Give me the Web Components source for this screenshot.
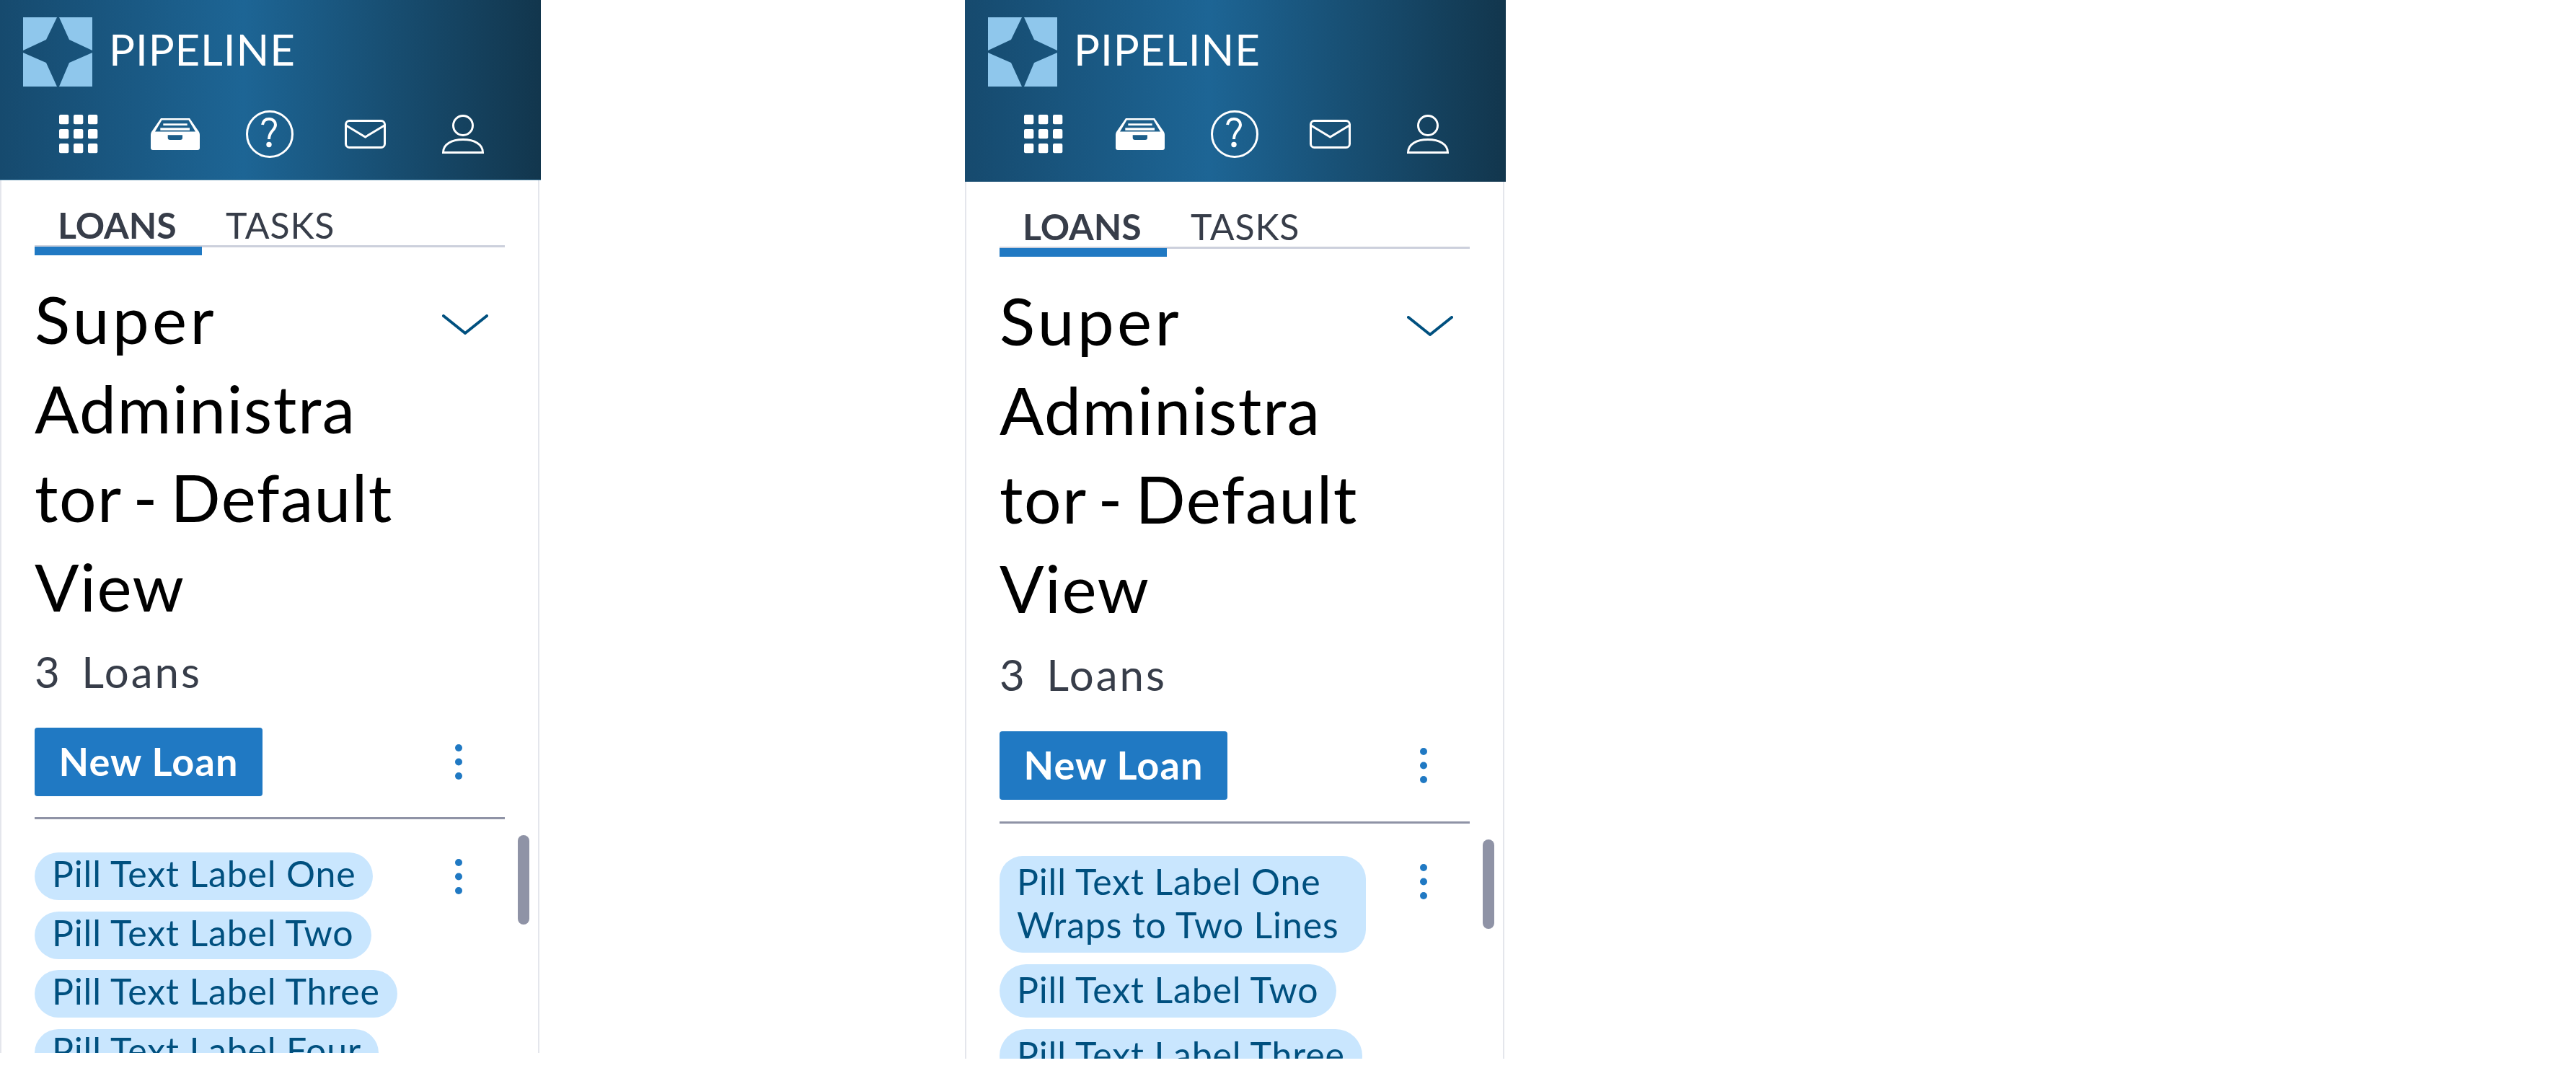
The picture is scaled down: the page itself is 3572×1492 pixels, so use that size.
<!DOCTYPE html>
<html>
<head>
<meta charset="utf-8">
<title>Pipeline</title>
<style>
    html, body{ margin: 0; background: #fff; }
    body{ width: 3572px; height: 1492px; overflow: hidden; font-family: Lato, "Liberation Sans", sans-serif; }
    .row{ display: flex; align-items: flex-start; gap: 588px; }
</style>
</head>
<body>
<div class="row">
    <pipeline-panel>
        <loan-pill>Pill Text Label One</loan-pill>
        <loan-pill>Pill Text Label Two</loan-pill>
        <loan-pill>Pill Text Label Three</loan-pill>
        <loan-pill>Pill Text Label Four</loan-pill>
    </pipeline-panel>
    <pipeline-panel roomy>
        <loan-pill style="width: 508px; border-radius: 32px">Pill Text Label One Wraps to Two Lines</loan-pill>
        <loan-pill>Pill Text Label Two</loan-pill>
        <loan-pill>Pill Text Label Three</loan-pill>
    </pipeline-panel>
</div>
<script>
const headTemplate = document.createElement('template')
headTemplate.innerHTML = `
    <style>
        :host{
            display: block;
            flex: none;
            height: var(--head-height);
            box-sizing: border-box;
            padding: 24px 32px 0;
            background: linear-gradient(90deg, #164a6e 0%, #1d6595 45%, #12364d 100%);
            border-bottom: var(--head-line);
        }
        .brand{ display: flex; align-items: center; height: 96px; gap: 23px; }
        .brand svg{ width: 96px; height: 96px; flex: none; }
        .brand span{
            color: #fff;
            font: 400 60px/96px Lato, sans-serif;
            letter-spacing: 0.900px;
            position: relative;
            top: -4px;
        }
        nav{ display: flex; margin: 18px 0 0 50px; height: 96px; align-items: center; }
        nav svg{ display: block; flex: none; }
    </style>
    <div class="brand">
        <svg viewBox="0 0 96 96"><path fill="#8fc7ec" d="M0 0H47L32 31 0 46ZM50 0H96V46L64 31ZM0 49 32 63 47 96H0ZM96 49V96H50L64 63Z"/></svg>
        <span>PIPELINE</span>
    </div>
    <nav>
        <svg width="54" height="54" viewBox="0 0 54 54" fill="#fff">
            <rect x="0" y="0" width="13.300" height="13.300" rx="2"/><rect x="20" y="0" width="13.300" height="13.300" rx="2"/><rect x="40" y="0" width="13.300" height="13.300" rx="2"/>
            <rect x="0" y="20" width="13.300" height="13.300" rx="2"/><rect x="20" y="20" width="13.300" height="13.300" rx="2"/><rect x="40" y="20" width="13.300" height="13.300" rx="2"/>
            <rect x="0" y="40" width="13.300" height="13.300" rx="2"/><rect x="20" y="40" width="13.300" height="13.300" rx="2"/><rect x="40" y="40" width="13.300" height="13.300" rx="2"/>
        </svg>
        <svg style="margin-left:73px" width="68" height="44" viewBox="0 0 68 44" fill="#fff">
            <path fill-rule="evenodd" d="M14 0H54L67 19Q68 21 68 23V41Q68 44 65 44H3Q0 44 0 41V23Q0 21 1 19ZM15.500 2.500 6 18.500H62L52.500 2.500ZM23.700 23.300V27Q23.700 30 26.700 30H41Q44 30 44 27V23.300Z"/>
            <rect x="17.300" y="7.300" width="33.400" height="2.700"/><rect x="13.300" y="13.300" width="40.700" height="3.400"/>
        </svg>
        <svg style="margin-left:64px" width="66" height="66" viewBox="0 0 66 66">
            <circle cx="33" cy="33" r="31.500" fill="none" stroke="#fff" stroke-width="3"/>
            <path d="M23 20C24 14 28 12 32 12 38 12 41 16 41 20 41 28 32 28 32 40" fill="none" stroke="#fff" stroke-width="4"/>
            <circle cx="32" cy="47.500" r="3.700" fill="#fff"/>
        </svg>
        <svg style="margin-left:71px" width="57" height="40" viewBox="0 0 57 40" fill="none" stroke="#fff" stroke-width="3">
            <rect x="1.500" y="1.500" width="54" height="37" rx="5"/>
            <path d="M2 8 28.500 24 55 8"/>
        </svg>
        <svg style="margin-left:78px" width="58" height="54" viewBox="0 0 58 54" fill="none" stroke="#fff" stroke-width="3">
            <circle cx="29" cy="15" r="13.500"/>
            <path d="M1.500 52.500H56.500C56.500 41 45 34.500 29 34.500S1.500 41 1.500 52.500Z"/>
        </svg>
    </nav>
`
class PipelineHead extends HTMLElement{
    constructor(){
        super()
        this.attachShadow({mode: "open"})
        this.shadowRoot.appendChild(headTemplate.content.cloneNode(true))
    }
}
customElements.define('pipeline-head', PipelineHead)

const tabsTemplate = document.createElement('template')
tabsTemplate.innerHTML = `
    <style>
        :host{
            display: flex;
            height: 93px;
            box-sizing: border-box;
            margin: 0 46px;
            border-bottom: 3px solid #ccd0dc;
            align-items: flex-end;
            color: #373d49;
            font-size: 50px;
            line-height: 64px;
        }
        div{ position: relative; height: 60px; box-sizing: border-box; }
        .on{ font-weight: 700; width: 232px; padding-left: 32px; }
        .on::after{
            content: "";
            position: absolute;
            left: 0; right: 0; bottom: -14px;
            height: 12px;
            background: #2079c3;
        }
        .off{ padding-left: 33px; letter-spacing: 0.8px; }
    </style>
    <div class="on">LOANS</div>
    <div class="off">TASKS</div>
`
class PipelineTabs extends HTMLElement{
    constructor(){
        super()
        this.attachShadow({mode: "open"})
        this.shadowRoot.appendChild(tabsTemplate.content.cloneNode(true))
    }
}
customElements.define('pipeline-tabs', PipelineTabs)

const pillTemplate = document.createElement('template')
pillTemplate.innerHTML = `
    <style>
        :host{
            display: block;
            width: fit-content;
            box-sizing: border-box;
            padding: var(--pill-pad) 24px var(--pill-pad-end);
            margin-bottom: var(--pill-gap);
            border-radius: 37px;
            background: #c9e6fe;
            color: #00507f;
            font-size: 50px;
            line-height: var(--pill-line);
            letter-spacing: 0.85px;
        }
    </style>
    <slot></slot>
`
class LoanPill extends HTMLElement{
    constructor(){
        super()
        this.attachShadow({mode: "open"})
        this.shadowRoot.appendChild(pillTemplate.content.cloneNode(true))
    }
}
customElements.define('loan-pill', LoanPill)

const dotsTemplate = document.createElement('template')
dotsTemplate.innerHTML = `
    <style>
        :host{ display: block; width: 10px; flex: none; }
        svg{ display: block; }
    </style>
    <svg width="10" height="49" viewBox="0 0 10 49" fill="#2079c3">
        <circle cx="5" cy="5" r="5"/><circle cx="5" cy="24.500" r="5"/><circle cx="5" cy="44" r="5"/>
    </svg>
`
class KebabDots extends HTMLElement{
    constructor(){
        super()
        this.attachShadow({mode: "open"})
        this.shadowRoot.appendChild(dotsTemplate.content.cloneNode(true))
    }
}
customElements.define('kebab-dots', KebabDots)

const panelTemplate = document.createElement('template')
panelTemplate.innerHTML = `
    <style>
        :host{
            --head-height: 250px;
            --head-line: 1px solid #4d86a8;
            --count-gap: 20px;
            --button-gap: 41px;
            --rule-gap: 29px;
            --list-pad: 46px;
            --more-top: 9px;
            --pill-pad: 0px;
            --pill-pad-end: 7px;
            --pill-line: 59px;
            --pill-gap: 15.500px;
            display: flex;
            flex-direction: column;
            flex: none;
            width: 750px;
            height: 1460px;
            overflow: hidden;
            background: #fff;
            font-family: Lato, "Liberation Sans", sans-serif;
        }
        :host([roomy]){
            --head-height: 252px;
            --head-line: 0;
            --count-gap: 22px;
            --button-gap: 42px;
            --rule-gap: 30px;
            --list-pad: 44.500px;
            --more-top: 11px;
            --pill-pad: 5px;
            --pill-pad-end: 9px;
            --pill-line: 60px;
            --pill-gap: 16px;
            height: 1468px;
        }
        .body{
            flex: 1;
            min-height: 0;
            width: 748px;
            box-sizing: border-box;
            border-left: 2px solid #e4e6ec;
            border-right: 2px solid #e4e6ec;
        }
        .title-row{ display: flex; margin: 0 46px; padding-top: 37px; }
        h1{
            flex: 1;
            margin: 0;
            font-size: 91px;
            line-height: 123.500px;
            font-weight: 400;
            letter-spacing: 1.500px;
            word-spacing: -8px;
            color: #000;
        }
        h1 span{ letter-spacing: 4.300px; }
        .chevron{ flex: none; margin: 56px 23px 0 0; }
        .count{
            margin: var(--count-gap) 46px 0;
            font-size: 60px;
            line-height: 74px;
            color: #373d49;
            letter-spacing: 3px;
            word-spacing: 9px;
        }
        .actions{
            display: flex;
            align-items: center;
            justify-content: space-between;
            margin: var(--button-gap) 46px 0;
            padding: 0 59px var(--rule-gap) 0;
            border-bottom: 3px solid #8f93a6;
        }
        button{
            width: 316px;
            height: 95px;
            border: 0;
            border-radius: 4px;
            background: #2079c3;
            color: #fff;
            font: 700 54px Lato, sans-serif;
            letter-spacing: 1.100px;
            padding: 0 0 3px;
        }
        .list{ position: relative; display: flex; margin: 0 46px; padding-top: var(--list-pad); }
        .pills{ flex: 1; min-width: 0; }
        .more{ margin: var(--more-top) 59px 0 0; }
        .bar{
            position: absolute;
            right: -34px;
            top: 22px;
            width: 16px;
            height: 124px;
            border-radius: 8px;
            background: #8f93a6;
        }
    </style>
    <pipeline-head></pipeline-head>
    <div class="body">
        <pipeline-tabs></pipeline-tabs>
        <div class="title-row">
            <h1><span>Super</span><br>Administra<br>tor - Default<br>View</h1>
            <svg class="chevron" width="64" height="28" viewBox="0 0 64 28" fill="none" stroke="#00507f" stroke-width="4" stroke-linecap="round" stroke-linejoin="round"><path d="M2 2 32 26 62 2"/></svg>
        </div>
        <div class="count">3 Loans</div>
        <div class="actions">
            <button>New Loan</button>
            <kebab-dots></kebab-dots>
        </div>
        <div class="list">
            <div class="pills"><slot></slot></div>
            <kebab-dots class="more"></kebab-dots>
            <div class="bar"></div>
        </div>
    </div>
`
class PipelinePanel extends HTMLElement{
    constructor(){
        super()
        this.attachShadow({mode: "open"})
        this.shadowRoot.appendChild(panelTemplate.content.cloneNode(true))
    }
}
customElements.define('pipeline-panel', PipelinePanel)
</script>
</body>
</html>
